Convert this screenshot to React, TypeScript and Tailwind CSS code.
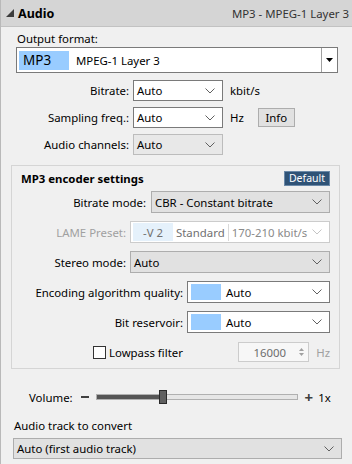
import React from "react";

const Chevron = ({ color = "#606060" }: { color?: string }) => (
  <svg width="10" height="6" viewBox="0 0 10 6" className="shrink-0">
    <path d="M0.5 0.5 L5 5 L9.5 0.5" fill="none" stroke={color} strokeWidth="1" />
  </svg>
);

const Select = ({
  text,
  className = "",
  variant = "white",
}: {
  text: React.ReactNode;
  className?: string;
  variant?: "white" | "gray" | "disabled";
}) => {
  const v =
    variant === "white"
      ? "bg-white border-[#7a7a7a]"
      : variant === "gray"
      ? "bg-[#e1e1e1] border-[#adadad]"
      : "bg-[#e8e8e8] border-[#bcbcbc]";
  return (
    <div className={`flex items-center border ${v} pl-[3px] pr-[7px] ${className}`}>
      <div className="flex-1 flex items-center min-w-0 whitespace-nowrap">{text}</div>
      <Chevron />
    </div>
  );
};

export default function App() {
  return (
    <div className="w-[352px] h-[464px] overflow-hidden bg-[#f0f0f0] border-l border-[#b9b9b9] text-[11.4px] leading-[15px] text-black whitespace-nowrap font-['Noto_Sans',sans-serif]">
      {/* Header */}
      <div className="h-[27px] bg-[#d5d5d5] border-b border-[#c2c2c2] flex items-center pl-[4px] pr-[3px]">
        <svg width="10" height="10" viewBox="0 0 10 10" className="mr-[3px]">
          <path d="M9 1 L9 9 L1 9 Z" fill="#3c3c3c" />
        </svg>
        <span className="font-bold text-[12.5px]">Audio</span>
        <span className="ml-auto text-[11.4px] text-[#333]">MP3 - MPEG-1 Layer 3</span>
      </div>

      {/* Output format */}
      <div className="mt-[4px] ml-[16px]">Output format:</div>
      <div className="mt-[1px] ml-[15px] w-[322px] h-[26px] border border-[#7a7a7a] bg-white flex items-center">
        <div className="ml-[2px] w-[50px] h-[19px] bg-[#99ccff] flex items-center pl-[4px] text-[13.5px]">MP3</div>
        <div className="ml-[7px] flex-1">MPEG-1 Layer 3</div>
        <div className="h-full w-[16px] border-l border-[#a0a0a0] flex items-center justify-center">
          <svg width="7" height="4" viewBox="0 0 7 4">
            <path d="M0 0 L7 0 L3.5 4 Z" fill="#000" />
          </svg>
        </div>
      </div>

      {/* Bitrate */}
      <div className="mt-[7px] flex items-center h-[21px]">
        <div className="w-[128px] text-right">Bitrate:</div>
        <Select text="Auto" className="ml-[4px] w-[90px] h-[21px]" />
        <span className="ml-[7px]">kbit/s</span>
      </div>
      <div className="mt-[6px] flex items-center h-[21px]">
        <div className="w-[128px] text-right">Sampling freq.:</div>
        <Select text="Auto" className="ml-[4px] w-[90px] h-[21px]" />
        <span className="ml-[7px]">Hz</span>
        <div className="ml-[14px] h-[19px] w-[37px] border border-[#adadad] bg-[#e1e1e1] flex items-center justify-center">Info</div>
      </div>
      <div className="mt-[6px] flex items-center h-[21px]">
        <div className="w-[128px] text-right">Audio channels:</div>
        <Select text="Auto" variant="disabled" className="ml-[4px] w-[90px] h-[21px]" />
      </div>

      {/* Group */}
      <div className="mt-[10px] ml-[10px] w-[329px] border border-[#d5d5d5] pb-[6px]">
        <div className="mt-[5px] flex items-center justify-between h-[15px] pl-[9px] pr-[9px]">
          <span className="font-bold">MP3 encoder settings</span>
          <div className="h-[15px] w-[46px] bg-[#2f5377] border border-[#6b89a8] text-white text-[10.5px] leading-[13px] flex items-center justify-center">Default</div>
        </div>

        <div className="mt-[5px] flex items-center h-[22px] pr-[9px]">
          <div className="w-[134px] text-right">Bitrate mode:</div>
          <Select text="CBR - Constant bitrate" variant="gray" className="ml-[5px] flex-1 h-[22px]" />
        </div>

        <div className="mt-[8px] flex items-center h-[22px] pr-[9px]">
          <div className="w-[114px] text-right text-[#a0a0a0]">LAME Preset:</div>
          <div className="ml-[4px] flex-1 h-[22px] border border-[#cccccc] bg-white flex items-center pr-[7px]">
            <div className="ml-[2px] w-[40px] h-[18px] bg-[#e5f1fb] text-[#707070] flex items-center justify-center">-V 2</div>
            <span className="ml-[3px] text-[#707070]">Standard</span>
            <div className="ml-[3px] w-px h-[17px] bg-[#d9d9d9]" />
            <span className="ml-[3px] flex-1 text-[#8a8a8a]">170-210 kbit/s</span>
            <Chevron color="#c4c4c4" />
          </div>
        </div>

        <div className="mt-[8px] flex items-center h-[22px] pr-[9px]">
          <div className="w-[114px] text-right">Stereo mode:</div>
          <Select text="Auto" variant="gray" className="ml-[4px] flex-1 h-[22px]" />
        </div>

        <div className="mt-[8px] flex items-center h-[22px] pr-[9px]">
          <div className="w-[171px] text-right">Encoding algorithm quality:</div>
          <Select
            text={
              <>
                <div className="w-[30px] h-[16px] bg-[#99ccff]" />
                <span className="ml-[5px]">Auto</span>
              </>
            }
            className="ml-[4px] flex-1 h-[22px]"
          />
        </div>

        <div className="mt-[8px] flex items-center h-[22px] pr-[9px]">
          <div className="w-[171px] text-right">Bit reservoir:</div>
          <Select
            text={
              <>
                <div className="w-[30px] h-[16px] bg-[#99ccff]" />
                <span className="ml-[5px]">Auto</span>
              </>
            }
            className="ml-[4px] flex-1 h-[22px]"
          />
        </div>

        <div className="mt-[9px] flex items-center h-[20px]">
          <div className="ml-[81px] w-[13px] h-[13px] border border-[#333] bg-white" />
          <span className="ml-[3px]">Lowpass filter</span>
          <div className="ml-auto w-[71px] h-[20px] border border-[#cccccc] bg-[#f7f7f7] flex items-center">
            <span className="flex-1 text-center text-[#6d6d6d] pl-[6px]">16000</span>
            <div className="w-[14px] flex flex-col items-center justify-center gap-[2px]">
              <svg width="5" height="3" viewBox="0 0 5 3"><path d="M0 3 L5 3 L2.5 0 Z" fill="#a0a0a0" /></svg>
              <svg width="5" height="3" viewBox="0 0 5 3"><path d="M0 0 L5 0 L2.5 3 Z" fill="#a0a0a0" /></svg>
            </div>
          </div>
          <span className="ml-[7px] mr-[9px] text-[#a0a0a0]">Hz</span>
        </div>
      </div>

      {/* Volume */}
      <div className="mt-[21px] flex items-center h-[14px]">
        <span className="ml-[28px]">Volume:</span>
        <div className="ml-[8px] w-[8px] h-[2px] bg-[#404040]" />
        <div className="ml-[7px] relative w-[202px] h-[6px] border border-[#b0b0b0] bg-[#e6e6e6]">
          <div className="absolute left-0 top-0 h-full w-[64px] bg-[#555555]" />
          <div className="absolute left-[62px] top-[-5px] w-[8px] h-[14px] bg-[#606060] border border-[#2a2a2a]" />
        </div>
        <span className="ml-[7px] font-bold text-[15px] text-[#404040] leading-[14px]">+</span>
        <span className="ml-[5px]">1x</span>
      </div>

      {/* Audio track */}
      <div className="mt-[14px] ml-[13px]">Audio track to convert</div>
      <Select text="Auto (first audio track)" variant="gray" className="mt-[5px] ml-[12px] w-[329px] h-[21px]" />
    </div>
  );
}
